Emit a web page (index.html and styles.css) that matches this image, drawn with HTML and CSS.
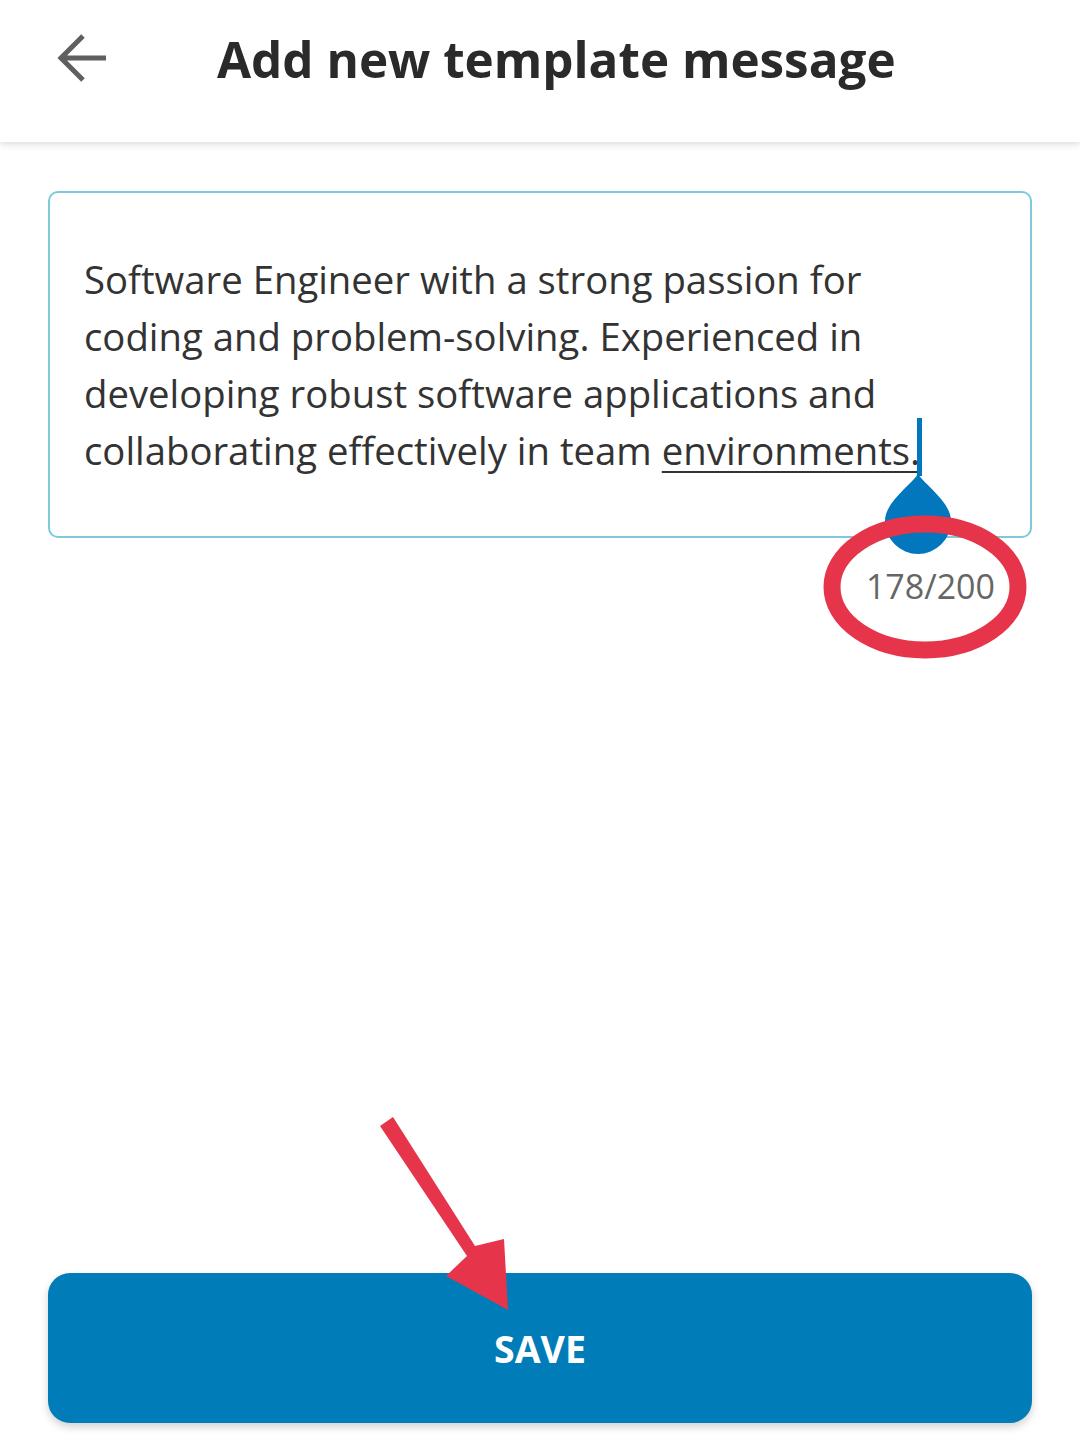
FILE: index.html
```html
<!DOCTYPE html>
<html lang="en">
<head>
    <meta charset="UTF-8">
    <meta name="viewport" content="width=device-width, initial-scale=1.0">
    <title>Add new template message</title>
    <link rel="stylesheet" href="styles.css">
</head>
<body>
    <div class="screen">
        <header class="topbar">
            <button class="back" aria-label="Back">
                <svg width="52" height="52" viewBox="0 0 52 52">
                    <path d="M49 25H5M26 3L4 25l22 22" fill="none" stroke="#5f5f5f" stroke-width="5" stroke-linecap="butt" stroke-linejoin="miter"/>
                </svg>
            </button>
            <h1>Add new template message</h1>
        </header>

        <main class="content">
            <div class="field">
                <p class="message">Software Engineer with a strong passion for coding and problem-solving. Experienced in developing robust software applications and collaborating effectively in team <span class="word">environments.</span></p>
            </div>
            <div class="counter">178/200</div>

            <button class="save">SAVE</button>
        </main>

        <!-- screenshot annotations drawn over the page -->
        <svg class="marks" width="1080" height="1455" viewBox="0 0 1080 1455">
            <rect x="917" y="418" width="5" height="58" fill="#0277bd"/>
            <path d="M918 474 C 926 486, 951 502, 951 521 A 33 33 0 0 1 885 521 C 885 502, 910 486, 918 474 Z" fill="#0277bd"/>
            <ellipse cx="925" cy="587" rx="93" ry="63" fill="none" stroke="#e6344a" stroke-width="17"/>
            <path d="M380 1126 L393 1117 L475 1246 L504 1239 L508 1310 L446 1276 L467 1256 Z" fill="#e6344a"/>
        </svg>
    </div>
</body>
</html>
```

FILE: styles.css
```css
* {
    box-sizing: border-box;
    margin: 0;
    padding: 0;
}
body {
    background: #fff;
    font-family: "Open Sans", "Noto Sans", sans-serif;
    color: #333;
}
.screen {
    position: relative;
    width: 1080px;
    min-height: 1455px;
    display: flex;
    flex-direction: column;
    overflow: hidden;
}
.topbar {
    height: 142px;
    display: flex;
    align-items: center;
    padding-left: 57px;
    padding-bottom: 24px;
    background: #fff;
    box-shadow: 0 3px 6px rgba(0, 0, 0, 0.12);
    position: relative;
    z-index: 1;
}
.back {
    border: none;
    background: none;
    display: flex;
    width: 52px;
    height: 52px;
}
.topbar h1 {
    margin-left: 108px;
    font-size: 49.4px;
    font-weight: 700;
    line-height: 60px;
    color: #2a2a2a;
}
.content {
    flex: 1;
    display: flex;
    flex-direction: column;
    padding: 49px 48px 32px;
}
.field {
    border: 2px solid #7ccadb;
    border-radius: 10px;
    height: 347px;
    padding: 58px 60px 0 34px;
}
.message {
    font-size: 38.3px;
    line-height: 57px;
    color: #333;
}
.word {
    text-decoration: underline;
    text-decoration-thickness: 2px;
    text-underline-offset: 6px;
}
.counter {
    align-self: flex-end;
    margin-top: 26px;
    margin-right: 37px;
    font-size: 34px;
    line-height: 44px;
    color: #666;
}
.save {
    margin-top: auto;
    height: 150px;
    border: none;
    border-radius: 22px;
    background: #007cb8;
    color: #fff;
    font-family: "Open Sans", "Noto Sans", sans-serif;
    font-size: 37.5px;
    font-weight: 700;
    box-shadow: 0 4px 8px rgba(0, 0, 0, 0.18);
}
.marks {
    position: absolute;
    top: 0;
    left: 0;
    pointer-events: none;
}
```
